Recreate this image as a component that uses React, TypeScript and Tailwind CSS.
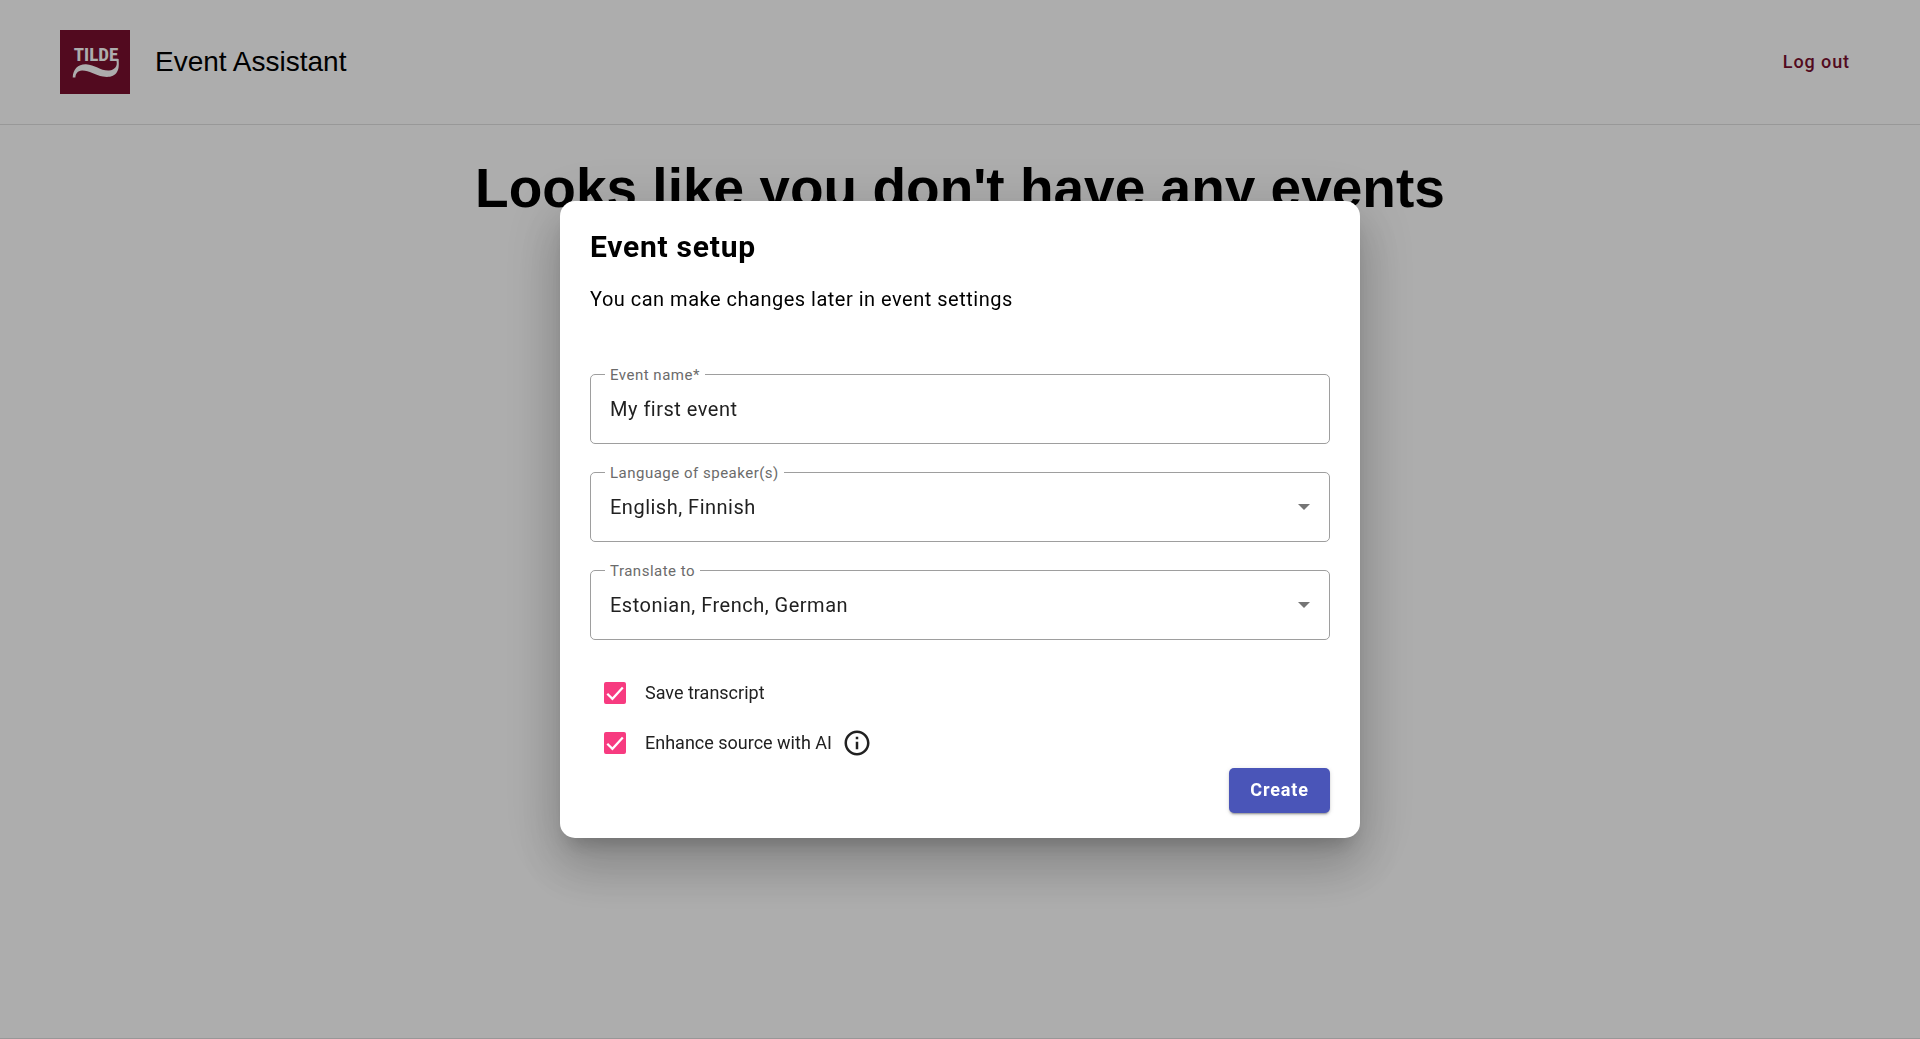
import { useState } from "react";
import type { ReactNode } from "react";
import { MdInfoOutline } from "react-icons/md";

interface IFieldProps {
  id: string;
  label: string;
  children: ReactNode;
}

interface ICheckProps {
  id: string;
  label: string;
  children?: ReactNode;
}

const TildeLogo = () => (
  <svg viewBox="0 0 70 64" className="h-16 w-[70px] shrink-0" role="img" aria-label="Tilde">
    <rect width="70" height="64" fill="#790f2f" />
    <text
      x="36"
      y="31"
      textAnchor="middle"
      fontSize="19"
      fontWeight="700"
      fill="#fff"
      className="font-['Liberation_Sans_Narrow','Roboto_Condensed','Liberation_Sans',sans-serif]"
    >
      TILDE
    </text>
    <path
      d="M12.7 47.5 C13 39 18 34 26 34.2 C35 34.6 41 41 49 40.5 C55 40 57.5 36 56.6 31.5 L56 29 L58.6 29 C59 35 59 39 57 42 C54.5 46.5 49 47.6 43 46.6 C35 45 29 40.2 22 40.4 C17.5 40.6 15.6 43.5 15.4 47.5 Z"
      fill="#fff"
    />
  </svg>
);

const OutlinedField = ({ id, label, children }: IFieldProps) => (
  <div className="relative flex h-[70px] items-center rounded-[5px] border border-[#9e9e9e] text-xl tracking-wide text-[#212121]">
    <label
      htmlFor={id}
      className="absolute -top-3 left-[14px] bg-white px-[5px] text-[15px] leading-6 text-[#6b6b6b]"
    >
      {label}
    </label>
    {children}
  </div>
);

const SelectField = ({ id, label, value }: { id: string; label: string; value: string }) => (
  <OutlinedField id={id} label={label}>
    <select id={id} className="h-full w-full appearance-none bg-transparent px-[19px] tracking-wide outline-none">
      <option>{value}</option>
    </select>
    <svg viewBox="0 0 12 6" className="pointer-events-none absolute right-[19px] h-[6px] w-3" aria-hidden="true">
      <path d="M0 0h12L6 6z" fill="#757575" />
    </svg>
  </OutlinedField>
);

const CheckField = ({ id, label, children }: ICheckProps) => {
  const [checked, setChecked] = useState(true);

  return (
    <div className="flex h-[50px] items-center pl-[14px]">
      <span className="grid size-[22px] place-items-center">
        <input
          id={id}
          type="checkbox"
          checked={checked}
          onChange={(e) => setChecked(e.target.checked)}
          className="col-start-1 row-start-1 size-[22px] appearance-none rounded-[2px] border-2 border-[#757575] checked:border-[#f73b80] checked:bg-[#f73b80]"
        />
        {checked && (
          <svg viewBox="0 0 24 24" className="pointer-events-none col-start-1 row-start-1 size-[18px]" aria-hidden="true">
            <path d="M1.7 12.9 8.6 19.8 22.4 4.8" fill="none" stroke="#fff" strokeWidth="3" />
          </svg>
        )}
      </span>
      <label htmlFor={id} className="pl-[19px] text-lg text-[#212121]">
        {label}
      </label>
      {children}
    </div>
  );
};

const EventSetupDialog = () => (
  <form
    role="dialog"
    aria-modal="true"
    aria-labelledby="setupTitle"
    onSubmit={(e) => e.preventDefault()}
    className="w-full max-w-[800px] rounded-[15px] bg-white px-[30px] pt-7 pb-[25px] font-[Roboto,sans-serif] shadow-[0_14px_19px_-9px_rgba(0,0,0,0.2),0_30px_48px_4px_rgba(0,0,0,0.14),0_11px_58px_10px_rgba(0,0,0,0.12)]"
  >
    <h2 id="setupTitle" className="text-3xl leading-9 font-bold tracking-wide">Event setup</h2>
    <p className="mt-5 text-xl leading-7 tracking-wide">You can make changes later in event settings</p>

    <div className="mt-[61px] space-y-7">
      <OutlinedField id="eventName" label="Event name*">
        <input
          id="eventName"
          type="text"
          defaultValue="My first event"
          className="h-full w-full bg-transparent px-[19px] tracking-wide outline-none"
        />
      </OutlinedField>
      <SelectField id="speakerLanguage" label="Language of speaker(s)" value="English, Finnish" />
      <SelectField id="translateTo" label="Translate to" value="Estonian, French, German" />
    </div>

    <div className="mt-7">
      <CheckField id="saveTranscript" label="Save transcript" />
      <CheckField id="enhanceSource" label="Enhance source with AI">
        <button type="button" aria-label="About AI enhancement" className="ml-[10px] text-[#212121]">
          <MdInfoOutline className="size-[30px]" />
        </button>
      </CheckField>
    </div>

    <div className="flex justify-end">
      <button
        type="submit"
        className="h-[45px] rounded-[5px] bg-[#4a55b8] px-[21px] pb-[2px] text-lg font-bold tracking-wider text-white shadow-[0_3px_1px_-2px_rgba(0,0,0,0.2),0_2px_2px_0_rgba(0,0,0,0.14),0_1px_5px_0_rgba(0,0,0,0.12)]"
      >
        Create
      </button>
    </div>
  </form>
);

export default function App() {
  return (
    <div className="flex min-h-screen flex-col border-b border-[#e0e0e0] bg-white font-['Liberation_Sans',Arial,sans-serif] text-black">
      <header className="flex items-center border-b border-[#e0e0e0] px-[60px] py-[30px]">
        <TildeLogo />
        <span className="pl-[25px] text-[28px] leading-8">Event Assistant</span>
        <button
          type="button"
          className="ml-auto px-[10px] py-2 font-[Roboto,sans-serif] text-lg font-medium tracking-wider text-[#790f2f]"
        >
          Log out
        </button>
      </header>

      <main className="px-[60px] pt-[31px]">
        <h1 className="text-center text-[55px] leading-[64px] font-bold">
          Looks like you don't have any events
        </h1>
      </main>

      <div className="fixed inset-0 flex items-center justify-center bg-black/32">
        <EventSetupDialog />
      </div>
    </div>
  );
}
